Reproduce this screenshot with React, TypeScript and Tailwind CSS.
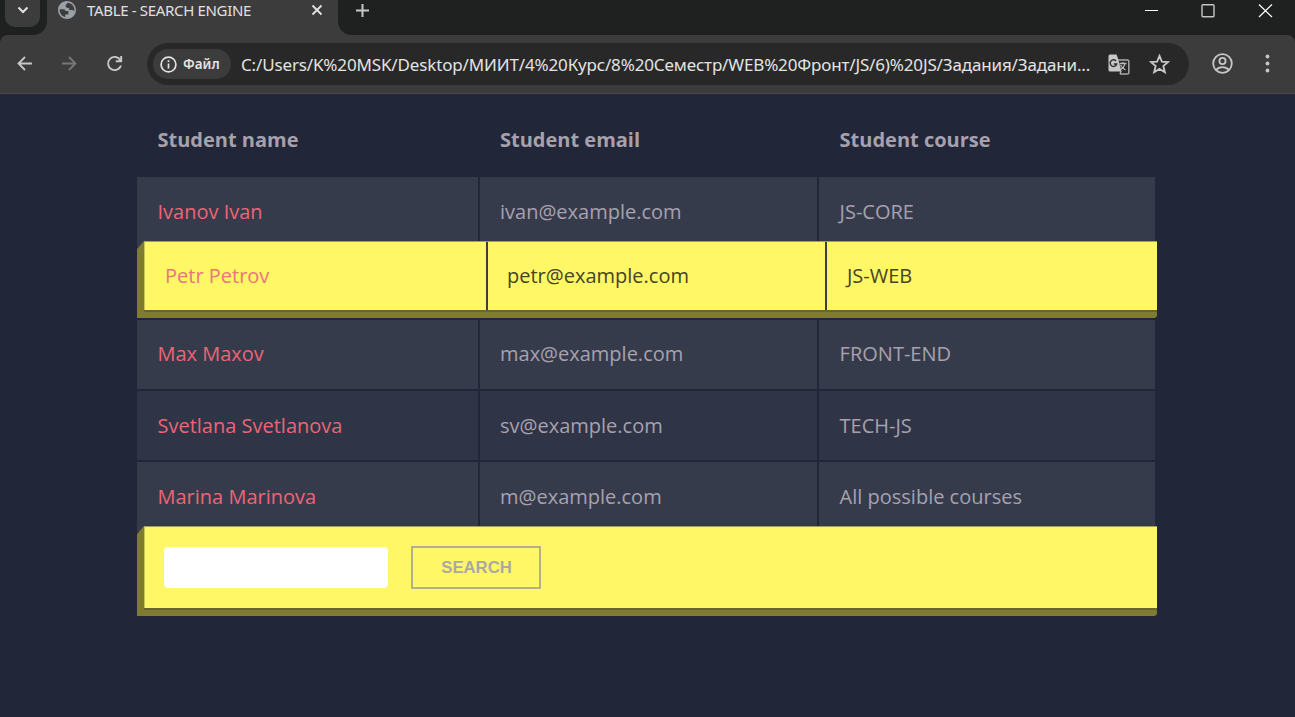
import type { ReactNode } from "react";

const students = [
  { name: "Ivanov Ivan", email: "ivan@example.com", course: "JS-CORE", style: "h-[70px] bg-[#363b4c] pt-[21px]" },
  { name: "Petr Petrov", email: "petr@example.com", course: "JS-WEB", style: "" },
  { name: "Max Maxov", email: "max@example.com", course: "FRONT-END", style: "mt-[2px] h-[69px] bg-[#363b4c] pt-5" },
  { name: "Svetlana Svetlanova", email: "sv@example.com", course: "TECH-JS", style: "mt-[2px] h-[69px] bg-[#2f3446] pt-[21px]" },
  { name: "Marina Marinova", email: "m@example.com", course: "All possible courses", style: "mt-[2px] h-[70px] bg-[#363b4c] pt-[21px]" },
];

function Row({ name, email, course, style }: (typeof students)[number]) {
  return (
    <div className="grid grid-cols-[341px_337px_336px] gap-x-[2px] text-[#a7a1ae]">
      <div className={`${style} pl-[20.5px] text-[#ee6475]`}>{name}</div>
      <div className={`${style} pl-[20px]`}>{email}</div>
      <div className={`${style} pl-[20.6px]`}>{course}</div>
    </div>
  );
}

function Raised({ children }: { children: ReactNode }) {
  return (
    <div className="-mt-[6px] w-[1020px] bg-[#7f7b33] pb-[8px] pl-[7px] [clip-path:polygon(7px_0,100%_0,100%_calc(100%_-_2px),calc(100%_-_2px)_100%,0_100%,0_8px)]">
      <div className="border-l border-t border-l-[#c8c35c] border-t-[#a49f50] shadow-[0_2px_0_#68652f]">{children}</div>
    </div>
  );
}

function Tabs() {
  return (
    <div className="flex h-[35px] bg-[#1f2121]">
      <div className="flex w-[47px] pl-[5px]">
        <div className="flex h-[27px] w-[35px] items-start justify-center rounded-b-[10px] bg-[#3c3c3c]">
          <svg className="mt-[5px]" width="12" height="10" fill="none" stroke="#e3e3e3" strokeWidth="2"><path d="m1.500 2.500 4.500 4.500 4.500-4.500" /></svg>
        </div>
      </div>
      <div className="relative flex w-[291px] bg-[#3c3c3c] pl-[11px]">
        <svg className="absolute -left-[14px] bottom-0" width="14" height="14"><path d="M14 0v14H0C8 14 14 8 14 0Z" fill="#3c3c3c" /></svg>
        <svg className="absolute -right-[14px] bottom-0" width="14" height="14"><path d="M0 0v14h14C6 14 0 8 0 0Z" fill="#3c3c3c" /></svg>
        <svg className="mt-px" width="18" height="18" viewBox="2 2 20 20" fill="#9aa0a6"><path d="M12 2C6.480 2 2 6.480 2 12s4.480 10 10 10 10-4.480 10-10S17.520 2 12 2zm0 18.200c-4.500 0-8.200-3.700-8.200-8.200 0-.3 0-.6.1-.9H8c2 0 2 .9 2 2h3.500v3.800H10v3.100c.6.1 1.300.2 2 .2zm8-6.200c-.4-1-1-1.900-2-1.900h-3.500v-2c-2.500 0-4-1-4-2.700 0-1.200.8-2 1.500-2V4c4.600 0 8.200 3.500 8.200 8 0 .7-.1 1.400-.2 2z" /></svg>
        <div className="ml-[11px] w-[210px] whitespace-nowrap text-[15px] leading-[20px] tracking-[-0.33px] text-[#e0e0e0]">TABLE - SEARCH ENGINE</div>
        <svg className="ml-[14px] mt-[4px]" width="12" height="12" stroke="#e3e3e3" strokeWidth="1.8"><path d="m1.500 1.500 9 9m0-9-9 9" /></svg>
      </div>
      <svg className="ml-[17px] mt-[3px]" width="14" height="14" stroke="#c7c7c7" strokeWidth="2"><path d="M7.500 1v13M1 7.500h13" /></svg>
      <svg className="ml-auto mr-[22px]" width="128" height="22" fill="none" stroke="#fff"><path d="M0 10.500h13" /><rect x="57" y="4.800" width="12" height="12" rx="1" stroke="#c4c4c4" strokeWidth="1.400" /><path d="m114 4.500 13 12.500m0-12.500L114 17" strokeWidth="1.200" /></svg>
    </div>
  );
}

function Toolbar() {
  return (
    <div className="bg-[#1f2121]">
      <div className="flex h-[59px] items-start rounded-t-[8px] border-b border-[#4a4a4a] bg-[#3c3c3c] pl-[17px] pt-[8px]">
        <svg className="mt-[13px]" width="15" height="16" fill="none" stroke="#c7c7c7" strokeWidth="1.8"><path d="M15 7.500H1.500M8 1 1.500 7.500 8 14" /></svg>
        <svg className="ml-[30px] mt-[13px]" width="15" height="16" fill="none" stroke="#777" strokeWidth="1.800"><path d="M0 7.500h13.500M7 1l6.500 6.500L7 14" /></svg>
        <svg className="ml-[29px] mt-[12px]" width="18" height="18" fill="none" stroke="#c7c7c7" strokeWidth="1.900"><path d="M14.300 5A6.600 6.600 0 1 0 15 10.500M15.200 1v5.200H9.800" /></svg>
        <div className="ml-[23px] flex h-[42px] w-[1042px] items-center rounded-full bg-[#282828] pl-[6px]">
          <div className="flex h-[30px] w-[78px] items-center rounded-full bg-[#3c3c3c] pl-[7px]">
            <svg width="17" height="17" fill="none" stroke="#e3e3e3" strokeWidth="1.700"><circle cx="8.500" cy="8.500" r="7.400" /><path d="M8.500 7.500v5M8.500 4.300v1.800" /></svg>
            <span className="ml-[6px] text-[13.500px] font-semibold text-[#e3e3e3]">Файл</span>
          </div>
          <div className="ml-[10px] mt-[2px] w-[856px] whitespace-nowrap text-[17px] leading-[22px] tracking-[-0.145px] text-[#e3e3e3]">C:/Users/K%20MSK/Desktop/МИИТ/4%20Курс/8%20Семестр/WEB%20Фронт/JS/6)%20JS/Задания/Задани...</div>
          <svg className="ml-[11px] mt-[2px]" width="22" height="22" fill="none">
            <path d="M9 6h10.500c.8 0 1.300.5 1.300 1.300v11.500c0 .8-.5 1.300-1.300 1.300h-7.500" stroke="#a8a8a8" strokeWidth="1.500" />
            <path d="M2 .5h6.500l1.500 4 3.500 13H2A1.500 1.500 0 0 1 .5 16V2A1.500 1.500 0 0 1 2 .5Z" fill="#c7c7c7" />
            <path d="M8 7A3.300 3.300 0 1 0 8.700 10H5.800" stroke="#333" strokeWidth="1.500" />
            <path d="M11.500 9.500h7M15 8v1.500m2 0c-.5 3-2.500 5-4 6m-.5-4.500c1 2 3 4 5 5M13 17l-1 3" stroke="#b8b8b8" strokeWidth="1.300" />
          </svg>
          <svg className="ml-[19px]" width="21" height="20" viewBox="1 1 22 22" fill="none" stroke="#c7c7c7" strokeWidth="2"><path d="m12 3 2.600 6.300 6.900.5-5.300 4.500 1.700 6.700-5.900-3.600L6.100 21l1.700-6.700-5.300-4.500 6.900-.5Z" /></svg>
        </div>
        <svg className="ml-[23px] mt-[10px]" width="21" height="21" fill="none" stroke="#c7c7c7" strokeWidth="1.800"><circle cx="10.500" cy="10.500" r="9.300" /><circle cx="10.500" cy="8" r="3.100" /><path d="M4 17c3.500-3.800 9.500-3.800 13 0" /></svg>
        <svg className="ml-[31px] mt-[11px]" width="6" height="19" fill="#c7c7c7"><circle cx="3.500" cy="2.500" r="1.900" /><circle cx="3.500" cy="9.500" r="1.900" /><circle cx="3.500" cy="16.500" r="1.900" /></svg>
      </div>
    </div>
  );
}

export default function App() {
  const [first, selected, ...rest] = students;
  return (
    <div className="h-[717px] w-[1295px] overflow-hidden bg-[#222639] font-['Noto_Sans',sans-serif]">
      <Tabs />
      <Toolbar />
      <main className="ml-[137px] w-[1018px] font-['Open_Sans',sans-serif] text-[20px] leading-[28px]">
        <div className="grid h-[83px] grid-cols-[343px_339px_336px] pt-8 font-bold text-[#a7a1ae]">
          <div className="pl-[20.5px]">Student name</div>
          <div className="pl-[20px]">Student email</div>
          <div className="pl-[20.6px]">Student course</div>
        </div>
        <Row {...first} />
        <Raised>
          <div className="grid h-[68px] grid-cols-[341px_337px_330px] gap-x-[2px] bg-[#3c3f3c] text-[#464424]">
            <div className="bg-[#fff765] pl-5 pt-5 text-[#ea757b]">{selected.name}</div>
            <div className="bg-[#fff765] pl-[19px] pt-5">{selected.email}</div>
            <div className="bg-[#fff765] pl-[20px] pt-5">{selected.course}</div>
          </div>
        </Raised>
        {rest.map((student) => <Row key={student.name} {...student} />)}
        <Raised>
          <div className="flex h-[81px] items-start bg-[#fff765] pl-[19px] pt-[19px]">
            <input aria-label="Search students" className="mt-px h-[41px] w-[224px] rounded-[4px] bg-white px-3 outline-none" />
            <button className="ml-[23px] h-[43px] w-[130px] border-2 border-[#b2b08c] pl-px font-['Liberation_Sans',sans-serif] text-[16.700px] font-bold leading-5 text-[#aaa9a5]">SEARCH</button>
          </div>
        </Raised>
      </main>
    </div>
  );
}
